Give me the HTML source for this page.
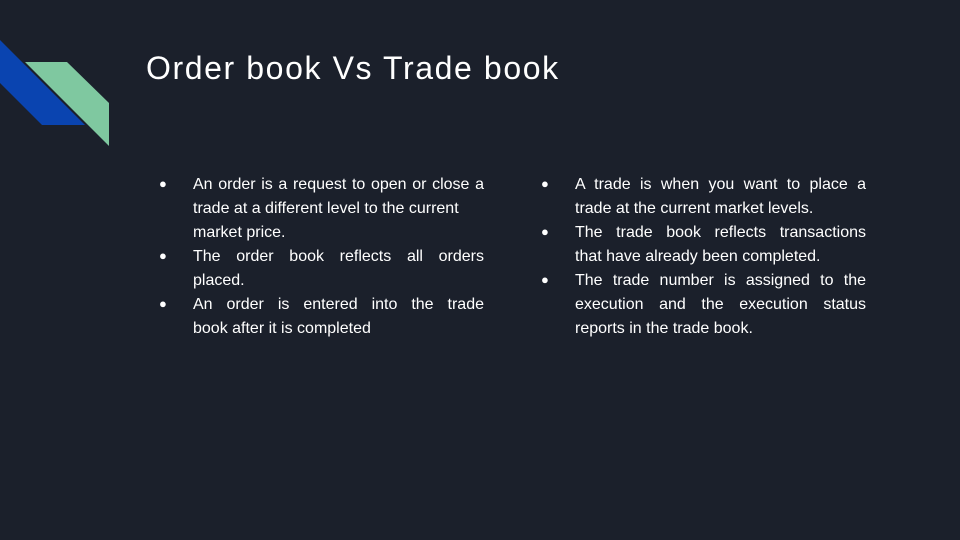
<!DOCTYPE html>
<html><head><style>
body{margin:0;width:960px;height:540px;background:#1b202b;overflow:hidden;position:relative;font-family:"Liberation Sans",sans-serif;color:#fff}
h1{position:absolute;left:146px;top:50px;margin:0;font-weight:normal;font-size:32px;letter-spacing:1.6px}
.col{position:absolute;top:173px;width:291px;font-size:16px;line-height:24px}
.col div{position:relative}
.col span{display:block;text-align:justify;text-align-last:justify;white-space:nowrap}
.col span.l{text-align-last:left}
.col div::before{content:"●";position:absolute;left:-34px;top:-1px;font-size:13px}
</style></head><body>
<svg width="120" height="160" style="position:absolute;left:0;top:0">
<polygon points="0,40 85,125 42,125 0,83" fill="#0a44b0"/>
<polygon points="25,62 67,62 109,103 109,146" fill="#7fc8a0"/>
</svg>
<h1>Order book Vs Trade book</h1>
<div class="col" style="left:193px">
<div><span style="white-space:normal">An order is a request to open or close a</span><span class="l">trade at a different level to the current</span><span class="l">market price.</span></div>
<div><span style="white-space:normal">The order book reflects all orders</span><span class="l">placed.</span></div>
<div><span style="white-space:normal">An order is entered into the trade</span><span class="l">book after it is completed</span></div>
</div>
<div class="col" style="left:575px">
<div><span style="white-space:normal">A trade is when you want to place a</span><span class="l">trade at the current market levels.</span></div>
<div><span style="white-space:normal">The trade book reflects transactions</span><span class="l">that have already been completed.</span></div>
<div><span style="white-space:normal">The trade number is assigned to the</span><span style="white-space:normal">execution and the execution status</span><span class="l">reports in the trade book.</span></div>
</div>
</body></html>
